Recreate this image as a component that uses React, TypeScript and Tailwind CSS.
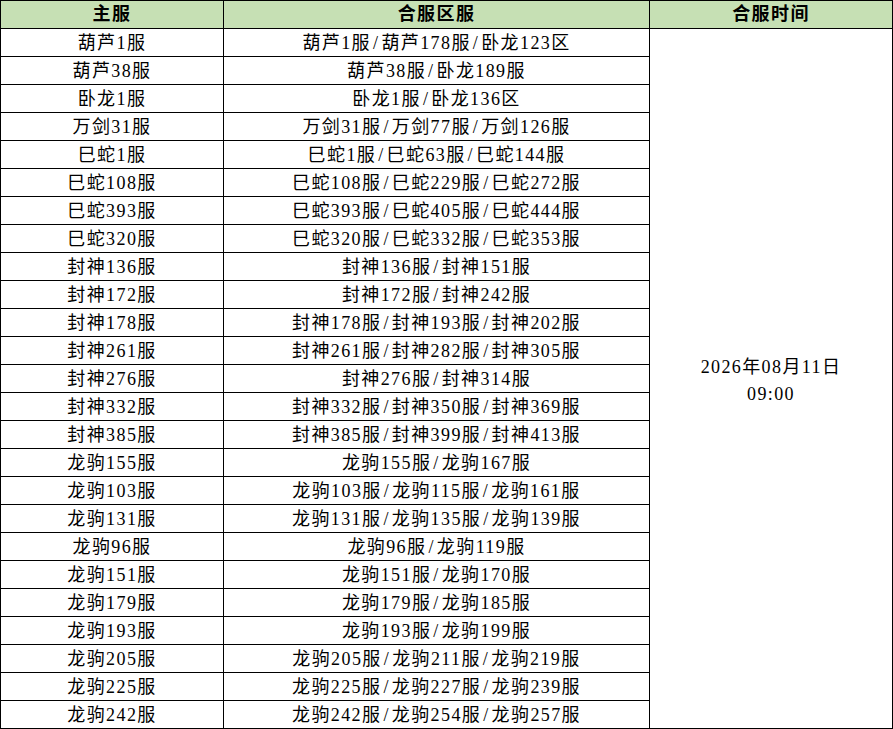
import React from "react";

const rows: [string, string][] = [
  ["葫芦1服", "葫芦1服/葫芦178服/卧龙123区"],
  ["葫芦38服", "葫芦38服/卧龙189服"],
  ["卧龙1服", "卧龙1服/卧龙136区"],
  ["万剑31服", "万剑31服/万剑77服/万剑126服"],
  ["巳蛇1服", "巳蛇1服/巳蛇63服/巳蛇144服"],
  ["巳蛇108服", "巳蛇108服/巳蛇229服/巳蛇272服"],
  ["巳蛇393服", "巳蛇393服/巳蛇405服/巳蛇444服"],
  ["巳蛇320服", "巳蛇320服/巳蛇332服/巳蛇353服"],
  ["封神136服", "封神136服/封神151服"],
  ["封神172服", "封神172服/封神242服"],
  ["封神178服", "封神178服/封神193服/封神202服"],
  ["封神261服", "封神261服/封神282服/封神305服"],
  ["封神276服", "封神276服/封神314服"],
  ["封神332服", "封神332服/封神350服/封神369服"],
  ["封神385服", "封神385服/封神399服/封神413服"],
  ["龙驹155服", "龙驹155服/龙驹167服"],
  ["龙驹103服", "龙驹103服/龙驹115服/龙驹161服"],
  ["龙驹131服", "龙驹131服/龙驹135服/龙驹139服"],
  ["龙驹96服", "龙驹96服/龙驹119服"],
  ["龙驹151服", "龙驹151服/龙驹170服"],
  ["龙驹179服", "龙驹179服/龙驹185服"],
  ["龙驹193服", "龙驹193服/龙驹199服"],
  ["龙驹205服", "龙驹205服/龙驹211服/龙驹219服"],
  ["龙驹225服", "龙驹225服/龙驹227服/龙驹239服"],
  ["龙驹242服", "龙驹242服/龙驹254服/龙驹257服"],
];

function Merged({ text }: { text: string }) {
  const parts = text.split("/");
  return (
    <>
      {parts.map((p, i) => (
        <React.Fragment key={i}>
          {i > 0 && <span className="mx-[2px]">/</span>}
          {p}
        </React.Fragment>
      ))}
    </>
  );
}

export default function App() {
  return (
    <div className="w-[893px] h-[729px] bg-white text-black font-['Liberation_Serif','Noto_Sans_CJK_SC',serif] text-[18px] tracking-[1.4px]">
      <div className="grid grid-cols-[223px_426px_243px] grid-rows-[28px_repeat(25,28px)] border-l border-t border-black">
        <div className="row-start-1 col-start-1 bg-[#c6e0b4] border-r border-b border-black flex items-center justify-center font-bold">主服</div>
        <div className="row-start-1 col-start-2 bg-[#c6e0b4] border-r border-b border-black flex items-center justify-center font-bold">合服区服</div>
        <div className="row-start-1 col-start-3 bg-[#c6e0b4] border-r border-b border-black flex items-center justify-center font-bold">合服时间</div>
        {rows.map(([a, b], i) => (
          <React.Fragment key={i}>
            <div className="col-start-1 border-r border-b border-black flex items-center justify-center leading-none" style={{ gridRowStart: i + 2 }}>{a}</div>
            <div className="col-start-2 border-r border-b border-black flex items-center justify-center leading-none whitespace-nowrap" style={{ gridRowStart: i + 2 }}>
              <Merged text={b} />
            </div>
          </React.Fragment>
        ))}
        <div className="col-start-3 row-start-2 row-span-25 border-r border-b border-black flex flex-col items-center justify-center leading-[27px] pt-[4px]">
          <div>2026年08月11日</div>
          <div>09:00</div>
        </div>
      </div>
    </div>
  );
}
